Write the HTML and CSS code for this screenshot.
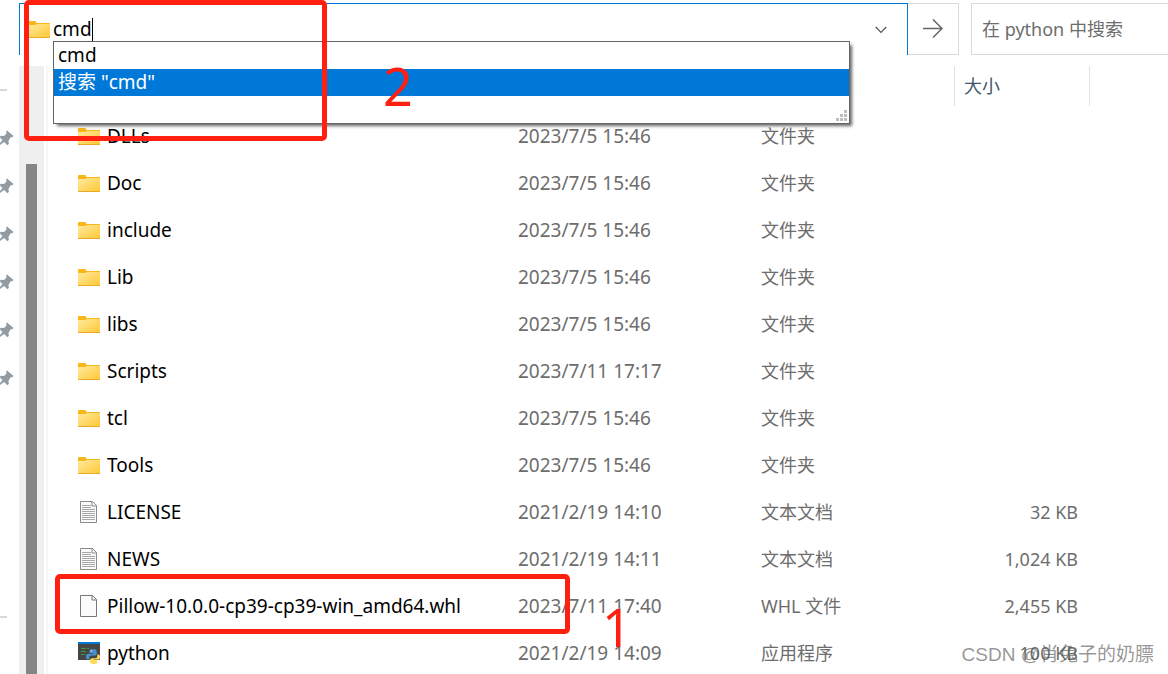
FILE: index.html
```
<!DOCTYPE html>
<html lang="zh-CN">
<head>
    <meta charset="utf-8">
    <title>python</title>
    <link rel="stylesheet" href="styles.css">
</head>
<body>
    <svg class="defs" width="0" height="0">
        <defs>
            <linearGradient id="folderFill" x1="0" y1="0" x2="1" y2="1">
                <stop offset="0" stop-color="#ffe9a0"/>
                <stop offset="1" stop-color="#ffc833"/>
            </linearGradient>
            <symbol id="folder" viewBox="0 0 22 22">
                <path d="M0 4q0-1 1-1h6.500l1 2H22v2H0z" fill="#f8b61a"/>
                <path d="M0 7h7.500l1.500-1h13v14H0z" fill="url(#folderFill)"/>
                <path d="M0 19h22v.5q0 .5-.5.5H.5q-.5 0-.5-.5z" fill="#e9a92a"/>
            </symbol>
            <symbol id="page" viewBox="0 0 22 22">
                <path d="M2.500.500h12l4 4v17h-16z" fill="#fafafa" stroke="#777"/>
                <path d="M14 .5v4.500h4.500" fill="none" stroke="#777"/>
            </symbol>
            <symbol id="text" viewBox="0 0 22 22">
                <path d="M2.500.500h12l4 4v17h-16z" fill="#fafafa" stroke="#8a8a8a"/>
                <path d="M14 .5v4.500h4.500" fill="none" stroke="#8a8a8a"/>
                <path d="M4 4.500h9M4 6.500h9M4 8.500h13M4 10.500h13M4 12.500h13M4 14.500h13M4 16.500h13M4 18.500h13" stroke="#a8a8a8"/>
            </symbol>
            <symbol id="python" viewBox="0 0 22 22">
                <path d="M0 0h22v18H0z" fill="#454545"/>
                <path d="M0 0h22v2H0z" fill="#0078d7"/>
                <path d="M3 6.500h5M3 9.500h5M3 12.500h4M9 6.500h2" stroke="#3c9a3c"/>
                <path d="M14.500 7c-2.500 0-3 1-3 2v2H15v.7h-4.700C8.500 11.700 8 13 8 14.500s.6 3 2 3h1.300v-2c0-1.300 1-2 2.200-2H17c1 0 1.700-.8 1.700-1.800V9c0-1.300-1.500-2-4.200-2z" fill="#4a90cc"/>
                <path d="M16 22c2.500 0 3.200-1 3.200-2v-1.700H16v-.7h4.500c1.200 0 1.500-1.200 1.500-2.600s-.5-2.600-1.800-2.600h-.9v1.800c0 1.200-1 2-2 2h-3.200c-1.200 0-2 .8-2 1.800v2c0 1.300 1.500 2 3.900 2z" fill="#ffd94f"/>
                <circle cx="13.200" cy="9" r=".7" fill="#fff"/>
            </symbol>
            <symbol id="pin" viewBox="0 0 14 16">
                <path d="M7 .5 13.500 6l-1 1.200-1.500-.2-2.500 3.500.3 3.500-1.500 1.300-3.200-3.300L0 15v-2l2.500-3L0 7.500v-1l1-.8 3 .3L6.500 3.500 6 1.500z" fill="#919ba1"/>
            </symbol>
        </defs>
    </svg>

    <div class="toolbar">
        <div class="address">
            <svg class="icon"><use href="#folder"/></svg>
            <input class="address-input" type="text" value="cmd" aria-label="地址">
            <span class="caret"></span>
            <button class="history" aria-label="历史记录">
                <svg width="12" height="8" viewBox="0 0 12 8"><path d="M.7 1 6 6.300 11.300 1" fill="none" stroke="#555" stroke-width="1.200"/></svg>
            </button>
            <div class="suggest">
                <ul>
                    <li>cmd</li>
                    <li class="selected">搜索 "cmd"</li>
                </ul>
                <svg class="grip" width="11" height="11"><path d="M8 0h3v3H8zM4 4h3v3H4zM8 4h3v3H8zM0 8h3v3H0zM4 8h3v3H4zM8 8h3v3H8z" fill="#bfbfbf"/></svg>
            </div>
        </div>
        <button class="go" aria-label="转到">
            <svg width="20" height="20" viewBox="0 0 20 20"><path d="M0 9.500h18.500M10 .5l9 9-9 9" fill="none" stroke="#666" stroke-width="1.500"/></svg>
        </button>
        <input class="search" type="text" placeholder="在 python 中搜索" aria-label="搜索">
    </div>

    <div class="main">
        <div class="nav">
            <hr>
            <div class="pins">
                <svg><use href="#pin"/></svg>
                <svg><use href="#pin"/></svg>
                <svg><use href="#pin"/></svg>
                <svg><use href="#pin"/></svg>
                <svg><use href="#pin"/></svg>
                <svg><use href="#pin"/></svg>
            </div>
            <hr>
        </div>
        <div class="scrollbar"><div class="thumb"></div></div>
        <table class="files">
            <thead>
                <tr>
                    <th class="name"></th>
                    <th class="date"></th>
                    <th class="type"></th>
                    <th class="size">大小</th>
                    <th class="rest"></th>
                </tr>
            </thead>
            <tbody>
                <tr><td><div class="file"><svg class="icon"><use href="#folder"/></svg>DLLs</div></td><td>2023/7/5 15:46</td><td>文件夹</td><td></td><td></td></tr>
                <tr><td><div class="file"><svg class="icon"><use href="#folder"/></svg>Doc</div></td><td>2023/7/5 15:46</td><td>文件夹</td><td></td><td></td></tr>
                <tr><td><div class="file"><svg class="icon"><use href="#folder"/></svg>include</div></td><td>2023/7/5 15:46</td><td>文件夹</td><td></td><td></td></tr>
                <tr><td><div class="file"><svg class="icon"><use href="#folder"/></svg>Lib</div></td><td>2023/7/5 15:46</td><td>文件夹</td><td></td><td></td></tr>
                <tr><td><div class="file"><svg class="icon"><use href="#folder"/></svg>libs</div></td><td>2023/7/5 15:46</td><td>文件夹</td><td></td><td></td></tr>
                <tr><td><div class="file"><svg class="icon"><use href="#folder"/></svg>Scripts</div></td><td>2023/7/11 17:17</td><td>文件夹</td><td></td><td></td></tr>
                <tr><td><div class="file"><svg class="icon"><use href="#folder"/></svg>tcl</div></td><td>2023/7/5 15:46</td><td>文件夹</td><td></td><td></td></tr>
                <tr><td><div class="file"><svg class="icon"><use href="#folder"/></svg>Tools</div></td><td>2023/7/5 15:46</td><td>文件夹</td><td></td><td></td></tr>
                <tr><td><div class="file"><svg class="icon"><use href="#text"/></svg>LICENSE</div></td><td>2021/2/19 14:10</td><td>文本文档</td><td>32 KB</td><td></td></tr>
                <tr><td><div class="file"><svg class="icon"><use href="#text"/></svg>NEWS</div></td><td>2021/2/19 14:11</td><td>文本文档</td><td>1,024 KB</td><td></td></tr>
                <tr><td><div class="file"><svg class="icon"><use href="#page"/></svg>Pillow-10.0.0-cp39-cp39-win_amd64.whl</div></td><td>2023/7/11 17:40</td><td>WHL 文件</td><td>2,455 KB</td><td></td></tr>
                <tr><td><div class="file"><svg class="icon"><use href="#python"/></svg>python</div></td><td>2021/2/19 14:09</td><td>应用程序</td><td>100 KB</td><td></td></tr>
            </tbody>
        </table>
    </div>

    <!-- step marks -->
    <div class="mark mark-address"></div>
    <div class="step step-2">2</div>
    <div class="mark mark-file"></div>
    <div class="step step-1">1</div>
    <div class="watermark">CSDN @肖兔子的奶膘</div>
</body>
</html>
```
FILE: styles.css
```
* { box-sizing: border-box; }
body {
    margin: 0;
    height: 100vh;
    overflow: hidden;
    position: relative;
    display: flex;
    flex-direction: column;
    background: #fff;
    color: #000;
    font-family: "Noto Sans", "Noto Sans CJK SC", sans-serif;
    font-size: 18px;
    line-height: 27px;
}
button, input {
    font: inherit;
    border: 0;
    padding: 0;
    background: none;
    outline: none;
}
button {
    display: flex;
    align-items: center;
    justify-content: center;
}
.defs { position: absolute; }
.icon { width: 22px; height: 22px; flex: none; margin-bottom: 2px; }

.toolbar {
    display: flex;
    height: 52px;
    margin: 3px 0 11px 19px;
    flex: none;
}
.address {
    position: relative;
    flex: 1;
    display: flex;
    align-items: center;
    padding-left: 8px;
    border: 1px solid #0078d7;
    border-bottom: 0;
    font-size: 19px;
}
.address-input { width: 39px; margin-left: 3px; }
.caret { width: 1px; height: 24px; background: #000; }
.history { width: 30px; height: 30px; margin: 0 11px 0 auto; }
.go {
    width: 51px;
    border: 1px solid #d9d9d9;
    border-left: 0;
}
.search {
    width: 197px;
    margin-left: 12px;
    padding-left: 10px;
    border: 1px solid #d9d9d9;
    border-right: 0;
}
.search::placeholder { color: #6d6d6d; opacity: 1; }

.suggest {
    position: absolute;
    z-index: 1;
    top: 37px;
    left: 33px;
    right: 57px;
    padding-bottom: 27px;
    background: #fff;
    border: 1px solid #646464;
    box-shadow: 3px 3px 3px -1px rgba(0,0,0,0.6);
}
.suggest ul { margin: 0; padding: 0; list-style: none; }
.suggest li { height: 27px; padding-left: 4px; }
.suggest .selected { background: #0078d7; color: #fff; }
.grip { position: absolute; right: 2px; bottom: 2px; }

.main { flex: 1; display: flex; min-height: 0; }
.nav { width: 19px; }
.nav hr {
    width: 7px;
    height: 2px;
    margin: 23px 0 0;
    border: 0;
    background: #d9d9d9;
}
.pins { padding: 23px 0 191px; }
.pins svg { display: block; width: 14px; height: 48px; }
.scrollbar {
    width: 25px;
    padding: 98px 7px 0;
    background: #efefef;
}
.thumb { height: 100%; background: #858585; }

.files {
    flex: 1;
    margin-left: 2px;
    border-left: 2px solid #f7f7f7;
    border-collapse: separate;
    border-spacing: 0;
    table-layout: fixed;
    height: max-content;
}
.files th {
    height: 40px;
    padding: 0 9px;
    font-weight: normal;
    text-align: left;
    color: #44576e;
}
.files .date { width: 243px; }
.files .type { width: 204px; border-right: 1px solid #e2e2e2; }
.files .size { width: 135px; border-right: 1px solid #e2e2e2; }
.files .rest { width: 78px; }
.files tbody::before { content: ""; display: block; height: 7px; }
.files td { height: 47px; padding: 0 12px 0 10px; color: #6d6d6d; }
.files td:first-child { padding-left: 30px; color: #000; }
.files td:nth-child(-n+2) { font-size: 19px; }
.files td:nth-child(4) { text-align: right; }
.file { display: flex; align-items: center; gap: 7px; white-space: nowrap; }

.mark {
    position: absolute;
    z-index: 2;
    border: 5px solid #ff2012;
    border-radius: 5px;
}
.mark-address { left: 24px; top: 0; width: 303px; height: 141px; }
.mark-file { left: 55px; top: 574px; width: 515px; height: 60px; }
.step {
    position: absolute;
    z-index: 2;
    color: #ff2012;
    font-size: 52px;
    line-height: 52px;
}
.step-2 { left: 383px; top: 60px; }
.step-1 { left: 602px; top: 601px; }
.watermark {
    position: absolute;
    right: 14px;
    bottom: 6px;
    color: rgba(80,80,80,0.6);
    font-family: "Liberation Sans", "Noto Sans CJK SC", sans-serif;
    font-size: 19px;
}
```
